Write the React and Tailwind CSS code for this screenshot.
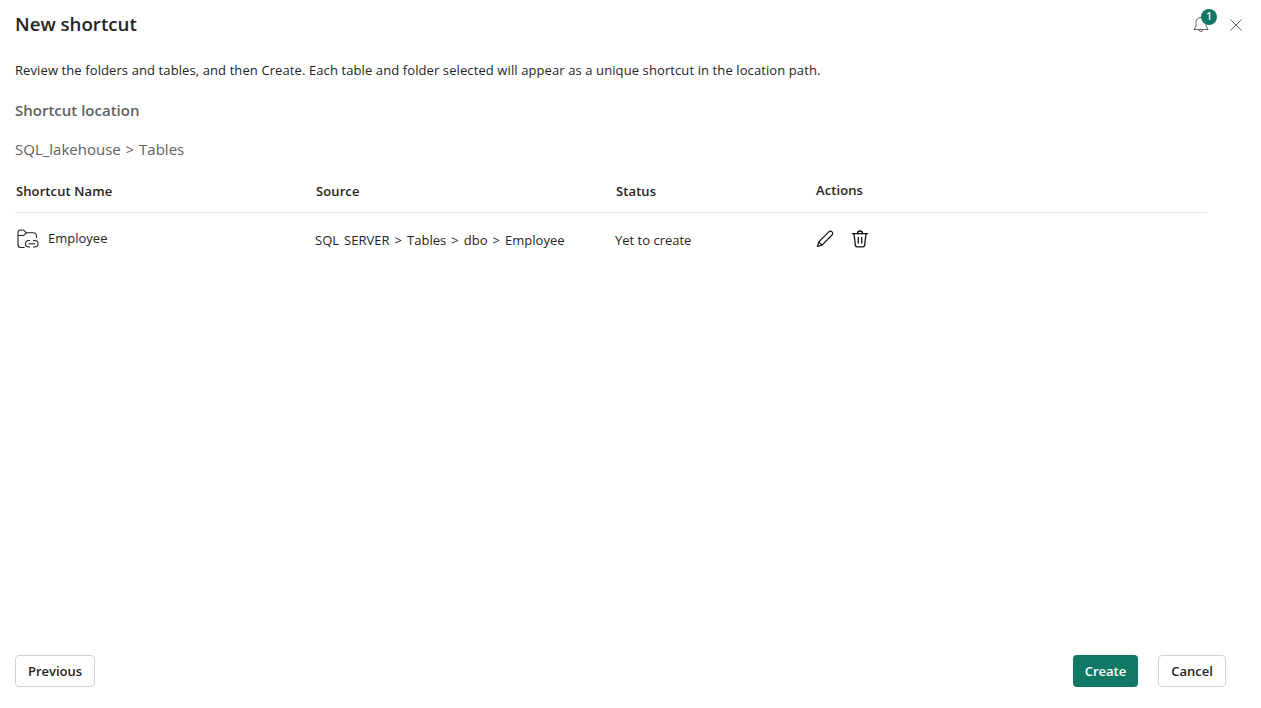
function FolderLink() {
    return (
        <svg width="22" height="20" viewBox="0 0 22 20" fill="none" stroke="#242424" strokeWidth="1.1">
            <path d="M7.5 18.5H4A3 3 0 0 1 1 15.5V3.5A2.5 2.5 0 0 1 3.5 1H6.5L9.5 3.8H16.5A3 3 0 0 1 19.5 6.8V9" />
            <path d="M1 6.5H6.5L9.5 3.8" />
            <path d="M13 11.5H11.8A3.2 3.2 0 0 0 11.8 18H13" />
            <path d="M16 11.5H17.8A3.2 3.2 0 0 1 17.8 18H16" />
            <path d="M11.5 14.8H18" />
        </svg>
    )
}

function PencilIcon() {
    return (
        <svg width="18" height="18" viewBox="0 0 18 18" fill="none" stroke="#111111" strokeWidth="1.2" strokeLinejoin="round">
            <path d="M1.5 16.5L2.8 11.8L12.8 1.8A2.1 2.1 0 0 1 16 5L6 15.1Z" />
            <path d="M2.8 11.8L6 15.1" />
        </svg>
    )
}

function TrashIcon() {
    return (
        <svg width="18" height="18" viewBox="0 0 18 18" fill="none" stroke="#111111" strokeWidth="1.3" strokeLinecap="round" strokeLinejoin="round">
            <path d="M1.5 3.7H16.5" />
            <path d="M6.5 3.5A2.5 2.5 0 0 1 11.5 3.5" />
            <path d="M3 3.7L4.3 14.8A2 2 0 0 0 6.3 16.8H11.7A2 2 0 0 0 13.7 14.8L15 3.7" />
            <path d="M7.3 7.5V13M10.7 7.5V13" />
        </svg>
    )
}

function BellIcon() {
    return (
        <svg width="18" height="18" viewBox="0 0 18 18" fill="none" stroke="#616161" strokeWidth="1">
            <path d="M9 1.5C5.8 1.5 4 3.8 4 6.5V10L2 13.5H16L14 10V6.5C14 3.8 12.2 1.5 9 1.5Z" strokeLinejoin="round" />
            <path d="M7 13.5A2 2 0 0 0 11 13.5" />
        </svg>
    )
}

function CloseIcon() {
    return (
        <svg width="12" height="12" viewBox="0 0 12 12" fill="none" stroke="#616161" strokeWidth="1">
            <path d="M0.5 0.5L11.5 11.5M11.5 0.5L0.5 11.5" />
        </svg>
    )
}

function App() {
    return (
        <div className="h-[708px] w-full bg-white text-[#242424] font-['Open_Sans','Liberation_Sans',sans-serif] flex flex-col px-[15px]">
            <div className="flex items-center justify-between h-[48px]">
                <h1 className="text-[18.7px] font-semibold">New shortcut</h1>
                <div className="flex items-center gap-[20px] pr-[4px] pt-[1px]">
                    <div className="relative">
                        <BellIcon />
                        <span className="absolute -top-[7px] left-[9px] w-[16px] h-[16px] rounded-full bg-[#117865] text-white text-[10px] font-semibold flex items-center justify-center">1</span>
                    </div>
                    <CloseIcon />
                </div>
            </div>
            <p className="text-[13px] tracking-[0.1px] mt-[14px] leading-[17px]">Review the folders and tables, and then Create. Each table and folder selected will appear as a unique shortcut in the location path.</p>
            <h2 className="text-[15px] font-semibold text-[#616161] mt-[21px] leading-[20px]">Shortcut location</h2>
            <p className="text-[15px] text-[#616161] mt-[19px] leading-[20px] [word-spacing:1px]">SQL_lakehouse &gt; Tables</p>
            <div className="w-[1192px] mt-[13px] border-b border-[#e8e8e8] h-[41px] grid grid-cols-[300px_300px_200px_1fr] text-[13px] tracking-[0.1px] font-semibold items-center pl-[1px]">
                <span>Shortcut Name</span>
                <span>Source</span>
                <span>Status</span>
                <span className="-mt-[2px]">Actions</span>
            </div>
            <div className="w-[1192px] grid grid-cols-[300px_300px_201px_1fr] items-center text-[13px] h-[56px]">
                <div className="flex items-center gap-[9px] pl-[2px] -mt-[5px]"><FolderLink /><span>Employee</span></div>
                <span className="[word-spacing:1.7px]">SQL SERVER &gt; Tables &gt; dbo &gt; Employee</span>
                <span>Yet to create</span>
                <div className="flex items-center gap-[17px] -mt-[4px]"><PencilIcon /><TrashIcon /></div>
            </div>
            <div className="mt-auto mb-[21px] flex items-center justify-between pr-[20px]">
                <button className="h-[32px] w-[80px] border border-[#d1d1d1] rounded text-[13px] font-semibold pt-[1px]">Previous</button>
                <div className="flex gap-[20px]">
                    <button className="h-[32px] w-[65px] rounded bg-[#117865] text-white text-[13px] font-semibold pt-[1px]">Create</button>
                    <button className="h-[32px] w-[68px] border border-[#d1d1d1] rounded text-[13px] font-semibold pt-[1px]">Cancel</button>
                </div>
            </div>
        </div>
    )
}

export default App
